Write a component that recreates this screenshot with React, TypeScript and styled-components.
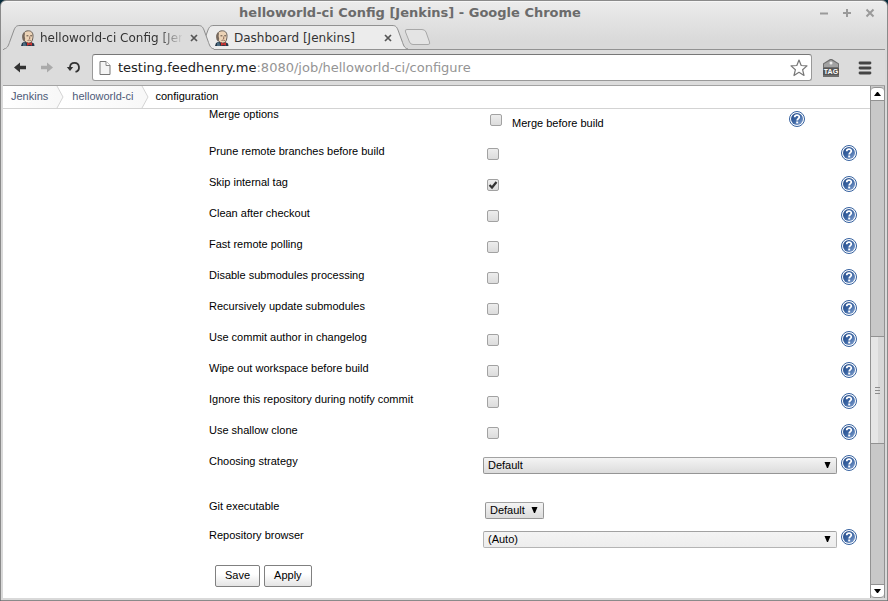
import React from "react";
import styled, { createGlobalStyle, css } from "styled-components";

const GlobalStyle = createGlobalStyle`
  * { box-sizing: border-box; }
  body { margin: 0; background: #082c3c; }
  button, select, input { font: inherit; color: inherit; margin: 0; }
`;

const uiFont = '"DejaVu Sans", sans-serif';
const pageFont = '"Liberation Sans", Arial, sans-serif';

const Window = styled.div`
  display: flex;
  flex-direction: column;
  min-height: 100vh;
  padding: 0 2px 2px;
  border: 1px solid #8a8a8a;
  border-radius: 6px 6px 0 0;
  background: linear-gradient(#ececec 0, #d9d9d9 40px);
  box-shadow: inset 0 1px #f6f6f6;
  font-family: ${uiFont};
  color: #333;
`;

const TitleBar = styled.header`
  display: grid;
  grid-template-columns: 18px 1fr 86px;
  align-items: center;
  height: 24px;
`;

const Title = styled.h1`
  grid-column: 2;
  margin: 0;
  text-align: center;
  font-size: 13px;
  line-height: 16px;
  font-weight: bold;
  color: #6b6b6b;
  white-space: nowrap;
`;

const WindowControls = styled.div`
  display: flex;
  justify-content: flex-end;
  gap: 11px;
  padding-right: 9px;
`;

const PlainButton = styled.button`
  display: flex;
  align-items: center;
  justify-content: center;
  padding: 0;
  border: 0;
  background: none;
`;

const TabStrip = styled.nav`
  display: flex;
  height: 25px;
  padding-left: 1px;
  border-bottom: 1px solid #929292;
`;

const TabShell = styled.div<{ $active?: boolean }>`
  display: flex;
  width: 210px;
  height: 25px;
  margin-right: -16px;
  position: relative;
  z-index: ${(p) => (p.$active ? 2 : 1)};
  svg { flex: none; }
`;

const TabBody = styled.div<{ $active?: boolean }>`
  display: flex;
  flex: 1;
  min-width: 0;
  align-items: center;
  height: ${(p) => (p.$active ? 25 : 24)}px;
  border-top: 1px solid #929292;
  background: ${(p) => (p.$active ? "#dcdcdc" : "#ececec")};
`;

const TabLink = styled.a<{ $fade?: boolean }>`
  flex: 1;
  min-width: 0;
  margin: 0 8px 0 4px;
  overflow: hidden;
  white-space: nowrap;
  font-size: 12px;
  line-height: 18px;
  color: #333;
  text-decoration: none;
  ${(p) => p.$fade && css`mask-image: linear-gradient(90deg, #000 118px, transparent 144px);`}
`;

const NewTab = styled(PlainButton)`
  margin: 2px 0 0 12px;
  height: 20px;
`;

const Toolbar = styled.div`
  display: flex;
  align-items: center;
  height: 36px;
  padding: 0 13px 0 9px;
  background: #dcdcdc;
  border-bottom: 1px solid #a3a3a3;
`;

const NavButtons = styled.div`
  display: flex;
  gap: 11px;
  width: 80px;
`;

const Omnibox = styled.div`
  display: flex;
  flex: 1;
  min-width: 0;
  align-items: center;
  height: 27px;
  padding: 0 3px 0 5px;
  border: 1px solid #999;
  border-top-color: #777;
  border-radius: 3px;
  background: #fff;
`;

const Address = styled.div`
  flex: 1;
  min-width: 0;
  overflow: hidden;
  margin-left: 6px;
  font-size: 13px;
  line-height: 20px;
  color: #949494;
  white-space: nowrap;
  outline: 0;
  b { font-weight: normal; color: #222; }
`;

const ToolbarActions = styled.div`
  display: flex;
  align-items: center;
  gap: 18px;
  margin-left: 10px;
`;

const Viewport = styled.div`
  display: flex;
  flex: 1;
  background: #fff;
  font-family: ${pageFont};
  font-size: 11px;
  line-height: 13px;
  color: #000;
`;

const Page = styled.main`
  flex: 1;
  min-width: 0;
`;

const Breadcrumbs = styled.nav`
  display: flex;
  align-items: center;
  height: 23px;
  border-bottom: 1px solid #d3d3d3;
  svg { flex: none; }
`;

const Crumb = styled.a<{ $current?: boolean }>`
  display: flex;
  align-items: center;
  height: 22px;
  padding: 0 8px 2px ${(p) => (p.$current ? 6 : 8)}px;
  color: ${(p) => (p.$current ? "#000" : "#4d5a78")};
  background: ${(p) => (p.$current ? "none" : "linear-gradient(90deg, #fff, #f8f8f8)")};
  text-decoration: none;
`;

const Form = styled.form`
  padding: 0 13px 11px 206px;
`;

const FormRow = styled.div<{ $height?: number }>`
  display: grid;
  grid-template-columns: 274px 1fr 16px;
  align-items: start;
  min-height: ${(p) => p.$height ?? 31}px;
`;

const Label = styled.label`
  display: block;
`;

const Control = styled.div<{ $inset?: number }>`
  display: flex;
  padding: 2px 4px 0 ${(p) => p.$inset ?? 0}px;
`;

const CheckControl = styled.div`
  display: flex;
  padding: 3px 4px 0;
`;

const MergeControl = styled.div`
  display: flex;
  align-items: start;
  gap: 10px;
  padding: 5px 0 0 7px;
  label { padding-top: 3px; }
`;

const MergeRow = styled(FormRow)`
  grid-template-columns: 274px 1fr 16px 52px;
  > button { margin-top: 2px; }
`;

const MergeLabel = styled.div`
  line-height: 11px;
`;

const Checkbox = styled.input.attrs({ type: "checkbox" })`
  appearance: none;
  flex: none;
  width: 12px;
  height: 12px;
  border: 1px solid #a2a2a2;
  border-radius: 2px;
  background: linear-gradient(#ededed, #dcdcdc);
  &:checked {
    background: url("data:image/svg+xml,%3Csvg xmlns='http://www.w3.org/2000/svg' viewBox='0 0 10 10'%3E%3Cpath d='M1.500 5 4 7.500 8.500 2' fill='none' stroke='%23333' stroke-width='2.200'/%3E%3C/svg%3E"), linear-gradient(#ededed, #dcdcdc);
  }
`;

const Select = styled.select<{ $wide?: boolean; $faded?: boolean }>`
  appearance: none;
  width: ${(p) => (p.$wide ? "100%" : "59px")};
  height: 17px;
  padding: 0 4px;
  border: 1px solid ${(p) => (p.$faded ? "#b4b4b4" : "#959595")};
  border-top-color: #a2a2a2;
  border-radius: 2px;
  line-height: 15px;
  background:
    url("data:image/svg+xml,%3Csvg xmlns='http://www.w3.org/2000/svg' viewBox='0 0 7 6'%3E%3Cpath d='M.5 0H6.500L4 6H3Z'/%3E%3C/svg%3E") no-repeat right 5px top 4px / 7px 6px,
    linear-gradient(#f4f4f4, ${(p) => (p.$faded ? "#ededed" : "#dcdcdc")});
`;

const Actions = styled.div`
  display: flex;
  gap: 4px;
  padding: 5px 6px 0;
`;

const PushButton = styled.button`
  height: 22px;
  padding: 0 9px 2px;
  border: 1px solid #808080;
  border-radius: 2px;
  background: linear-gradient(#fff 40%, #e4e4e4);
`;

const Scrollbar = styled.div`
  display: grid;
  grid-template-rows: 14px 235fr 108px 140fr 14px;
  width: 15px;
  padding-top: 1px;
  background: #c8c8c8;
  border-left: 1px solid #929292;
  border-right: 1px solid #929292;
`;

const ScrollButton = styled(PlainButton)<{ $end?: boolean }>`
  background: #fff;
  border: solid #929292;
  border-width: 1px 0;
  border-radius: ${(p) => (p.$end ? "0 0 4px 4px" : "4px 4px 0 0")};
`;

const Thumb = styled.div`
  display: flex;
  flex-direction: column;
  align-items: center;
  justify-content: center;
  gap: 2px;
  border: solid #929292;
  border-width: 1px 0;
  background: linear-gradient(90deg, #e6e6e6 50%, #d8d8d8 50%);
`;

const Grip = styled.i`
  width: 5px;
  height: 1px;
  background: #8c8c8c;
`;

function Butler() {
  return (
    <svg width="16" height="16" viewBox="0 0 16 16">
      <path d="M1 16 2 13 5 11.500 11 12 14 13.500 14.500 16Z" fill="#24384a" />
      <path d="M3.500 8C2.500 3.500 4.500 .8 8.300 .8c3.900 0 5.200 3 4.600 7-.4 3.400-1.800 5.300-4.200 5.300S4.200 11.300 3.500 8Z" fill="#ecd3b6" stroke="#5d554e" strokeWidth=".9" />
      <path d="M4 2.500C2 4 1.700 6.500 2.600 9.800L4 11.500 5.200 9 4.600 6 5 3.500Z" fill="#77695d" />
      <path d="M6.500 5.800h1.900M10.200 5.800h1.900" fill="none" stroke="#5b4a40" />
      <path d="M9.500 6.500 10 8.400H9M7.500 10.500q1.600-1 3.400 0" fill="none" stroke="#8a6552" strokeWidth=".9" />
      <path d="M7 12.300 9.500 13.500 12 12.300v3.400L9.500 14.700 7 15.700Z" fill="#cc3431" />
      <path d="m3 13 2-1 1.500 4H3Z" fill="#4a6b80" />
    </svg>
  );
}

function TabEdge({ side, active }: { side: "left" | "right"; active?: boolean }) {
  const fill = active ? "#dcdcdc" : "#ececec";
  const left = "M0 24C4 23 4.500 20 6 16L10 5C11.500 1.500 12.500 .5 16 .5";
  return (
    <svg width="16" height="25" viewBox="0 0 16 25">
      <g transform={side === "right" ? "translate(16 0) scale(-1 1)" : undefined}>
        <path d={`${left}V${active ? 25 : 24}H0Z`} fill={fill} />
        <path d={left} fill="none" stroke="#8e8e8e" />
      </g>
    </svg>
  );
}

function CloseIcon() {
  return (
    <svg width="8" height="8" viewBox="0 0 8 8">
      <path d="m1 1 6 6M7 1 1 7" stroke="#555" strokeWidth="1.700" />
    </svg>
  );
}

function Tab({ title, active }: { title: string; active?: boolean }) {
  return (
    <TabShell $active={active}>
      <TabEdge side="left" active={active} />
      <TabBody $active={active}>
        <Butler />
        <TabLink href="#" $fade={active}>{title}</TabLink>
        <PlainButton aria-label="Close tab"><CloseIcon /></PlainButton>
      </TabBody>
      <TabEdge side="right" active={active} />
    </TabShell>
  );
}

function Help() {
  return (
    <PlainButton type="button" aria-label="Help">
      <svg width="16" height="16" viewBox="0 0 16 16">
        <defs>
          <linearGradient id="help" x1="0" y1="0" x2="1" y2="1">
            <stop stopColor="#1f4685" />
            <stop offset=".5" stopColor="#3c66a4" />
            <stop offset="1" stopColor="#8ba8d4" />
          </linearGradient>
        </defs>
        <circle cx="8" cy="8" r="7.500" fill="#fff" stroke="#35619f" />
        <circle cx="8" cy="8" r="6" fill="url(#help)" />
        <path d="M5.700 6.200C5.700 3.400 10.400 3.500 10.300 6.100 10.200 7.600 8.200 7.700 8.200 9.500" fill="none" stroke="#fff" strokeWidth="1.800" />
        <path d="M7.200 10.500h2v1.900h-2Z" fill="#fff" />
      </svg>
    </PlainButton>
  );
}

function Arrow({ forward }: { forward?: boolean }) {
  return (
    <svg width="16" height="14" viewBox="0 0 16 14">
      <path
        d="M2 6.500 8 1.500V4.800H14V8.200H8V11.500Z"
        fill={forward ? "#aaa" : "#333"}
        transform={forward ? "translate(16 0) scale(-1 1)" : undefined}
      />
    </svg>
  );
}

function Separator() {
  return (
    <svg width="8" height="22" viewBox="0 0 8 22">
      <path d="M0 0H1L7 11 1 22H0Z" fill="#f8f8f8" />
      <path d="M1 0 7 11 1 22" fill="none" stroke="#d4d4d4" />
    </svg>
  );
}

const windowActions = [
  ["Minimize", "M1 6.500H9"],
  ["Maximize", "M1 6H9M5 2V10"],
  ["Close", "M1.500 2.500 8.500 9.500M8.500 2.500 1.500 9.500"],
];

const options = [
  "Prune remote branches before build",
  "Skip internal tag",
  "Clean after checkout",
  "Fast remote polling",
  "Disable submodules processing",
  "Recursively update submodules",
  "Use commit author in changelog",
  "Wipe out workspace before build",
  "Ignore this repository during notify commit",
  "Use shallow clone",
];

export default function App() {
  return (
    <>
      <GlobalStyle />
      <Window>
        <TitleBar>
          <Title>helloworld-ci Config [Jenkins] - Google Chrome</Title>
          <WindowControls>
            {windowActions.map(([name, d]) => (
              <PlainButton key={name} aria-label={name}>
                <svg width="12" height="12" viewBox="-1 0 12 12">
                  <path d={d} stroke="#9a9a9a" strokeWidth="2" />
                </svg>
              </PlainButton>
            ))}
          </WindowControls>
        </TitleBar>
        <TabStrip>
          <Tab title="helloworld-ci Config [Jenkins]" active />
          <Tab title="Dashboard [Jenkins]" />
          <NewTab aria-label="New tab">
            <svg width="28" height="18" viewBox="0 0 28 18">
              <path d="M3 1.500H18Q21 1.500 22 4L25.500 14Q26.500 16.500 24 16.500H9Q6.500 16.500 5.500 14L1.500 4Q.5 1.500 3 1.500Z" fill="#e4e4e4" stroke="#a8a8a8" />
            </svg>
          </NewTab>
        </TabStrip>
        <Toolbar>
          <NavButtons>
            <PlainButton aria-label="Back"><Arrow /></PlainButton>
            <PlainButton aria-label="Forward"><Arrow forward /></PlainButton>
            <PlainButton aria-label="Reload">
              <svg width="16" height="14" viewBox="0 0 16 14">
                <path d="M4 7.500V6A4.500 4.500 0 1 1 9.500 10.800" fill="none" stroke="#333" strokeWidth="1.800" />
                <path d="M.8 6H7.200L4 10Z" fill="#333" />
              </svg>
            </PlainButton>
          </NavButtons>
          <Omnibox>
            <svg width="14" height="16" viewBox="0 0 14 16">
              <path d="M2 1.500H8L12 5.500V14.500H2Z" fill="#f4f4f4" stroke="#777" />
              <path d="M8 1.500V5.500H12" fill="#fff" stroke="#888" />
            </svg>
            <Address role="textbox" aria-label="Address" contentEditable suppressContentEditableWarning spellCheck={false}>
              <b>testing.feedhenry.me</b>:8080/job/helloworld-ci/configure
            </Address>
            <PlainButton aria-label="Bookmark this page">
              <svg width="18" height="18" viewBox="0 0 18 18">
                <path d="M9 1 11.200 6.500 17 6.900 12.600 10.700 14 16.500 9 13.300 4 16.500 5.400 10.700 1 6.900 6.800 6.500Z" fill="#fff" stroke="#777" strokeWidth="1.200" strokeLinejoin="round" />
              </svg>
            </PlainButton>
          </Omnibox>
          <ToolbarActions>
            <PlainButton aria-label="Tag">
              <svg width="18" height="20" viewBox="0 0 18 20">
                <path d="M1 5.500 8 1H10L17 5.500V19H1Z" fill="#6e6e6e" />
                <path d="M2 6 9 2 16 6V9H2Z" fill="#a2a2a2" />
                <circle cx="9" cy="5" r="1.500" fill="#eee" />
                <path d="M1 10H17V17H1Z" fill="#555" />
                <text x="9" y="16" fill="#fff" fontSize="7" fontWeight="bold" fontFamily="Liberation Sans, sans-serif" textAnchor="middle">TAG</text>
              </svg>
            </PlainButton>
            <PlainButton aria-label="Menu">
              <svg width="14" height="14" viewBox="0 0 14 14">
                <path d="M2 2H12M2 7H12M2 12H12" stroke="#444" strokeWidth="2.800" strokeLinecap="round" />
              </svg>
            </PlainButton>
          </ToolbarActions>
        </Toolbar>
        <Viewport>
          <Page>
            <Breadcrumbs aria-label="Breadcrumb">
              <Crumb href="#">Jenkins</Crumb>
              <Separator />
              <Crumb href="#">helloworld-ci</Crumb>
              <Separator />
              <Crumb href="#" $current>configuration</Crumb>
            </Breadcrumbs>
            <Form onSubmit={(e) => e.preventDefault()}>
              <MergeRow $height={36}>
                <MergeLabel>Merge options</MergeLabel>
                <MergeControl>
                  <Checkbox id="merge" />
                  <Label htmlFor="merge">Merge before build</Label>
                </MergeControl>
                <Help />
              </MergeRow>
              {options.map((name, i) => (
                <FormRow key={name}>
                  <Label htmlFor={`option-${i}`}>{name}</Label>
                  <CheckControl>
                    <Checkbox id={`option-${i}`} defaultChecked={name === "Skip internal tag"} />
                  </CheckControl>
                  <Help />
                </FormRow>
              ))}
              <FormRow $height={45}>
                <Label htmlFor="strategy">Choosing strategy</Label>
                <Control>
                  <Select id="strategy" $wide><option>Default</option></Select>
                </Control>
                <Help />
              </FormRow>
              <FormRow $height={29}>
                <Label htmlFor="git">Git executable</Label>
                <Control $inset={2}>
                  <Select id="git"><option>Default</option></Select>
                </Control>
              </FormRow>
              <FormRow>
                <Label htmlFor="browser">Repository browser</Label>
                <Control>
                  <Select id="browser" $wide $faded><option>(Auto)</option></Select>
                </Control>
                <Help />
              </FormRow>
              <Actions>
                <PushButton type="submit">Save</PushButton>
                <PushButton type="button">Apply</PushButton>
              </Actions>
            </Form>
          </Page>
          <Scrollbar>
            <ScrollButton aria-label="Scroll up">
              <svg width="7" height="4" viewBox="0 0 7 4"><path d="M0 4H7L4 0H3Z" /></svg>
            </ScrollButton>
            <span />
            <Thumb><Grip /><Grip /><Grip /></Thumb>
            <span />
            <ScrollButton $end aria-label="Scroll down">
              <svg width="7" height="4" viewBox="0 0 7 4"><path d="M0 0H7L4 4H3Z" /></svg>
            </ScrollButton>
          </Scrollbar>
        </Viewport>
      </Window>
    </>
  );
}
